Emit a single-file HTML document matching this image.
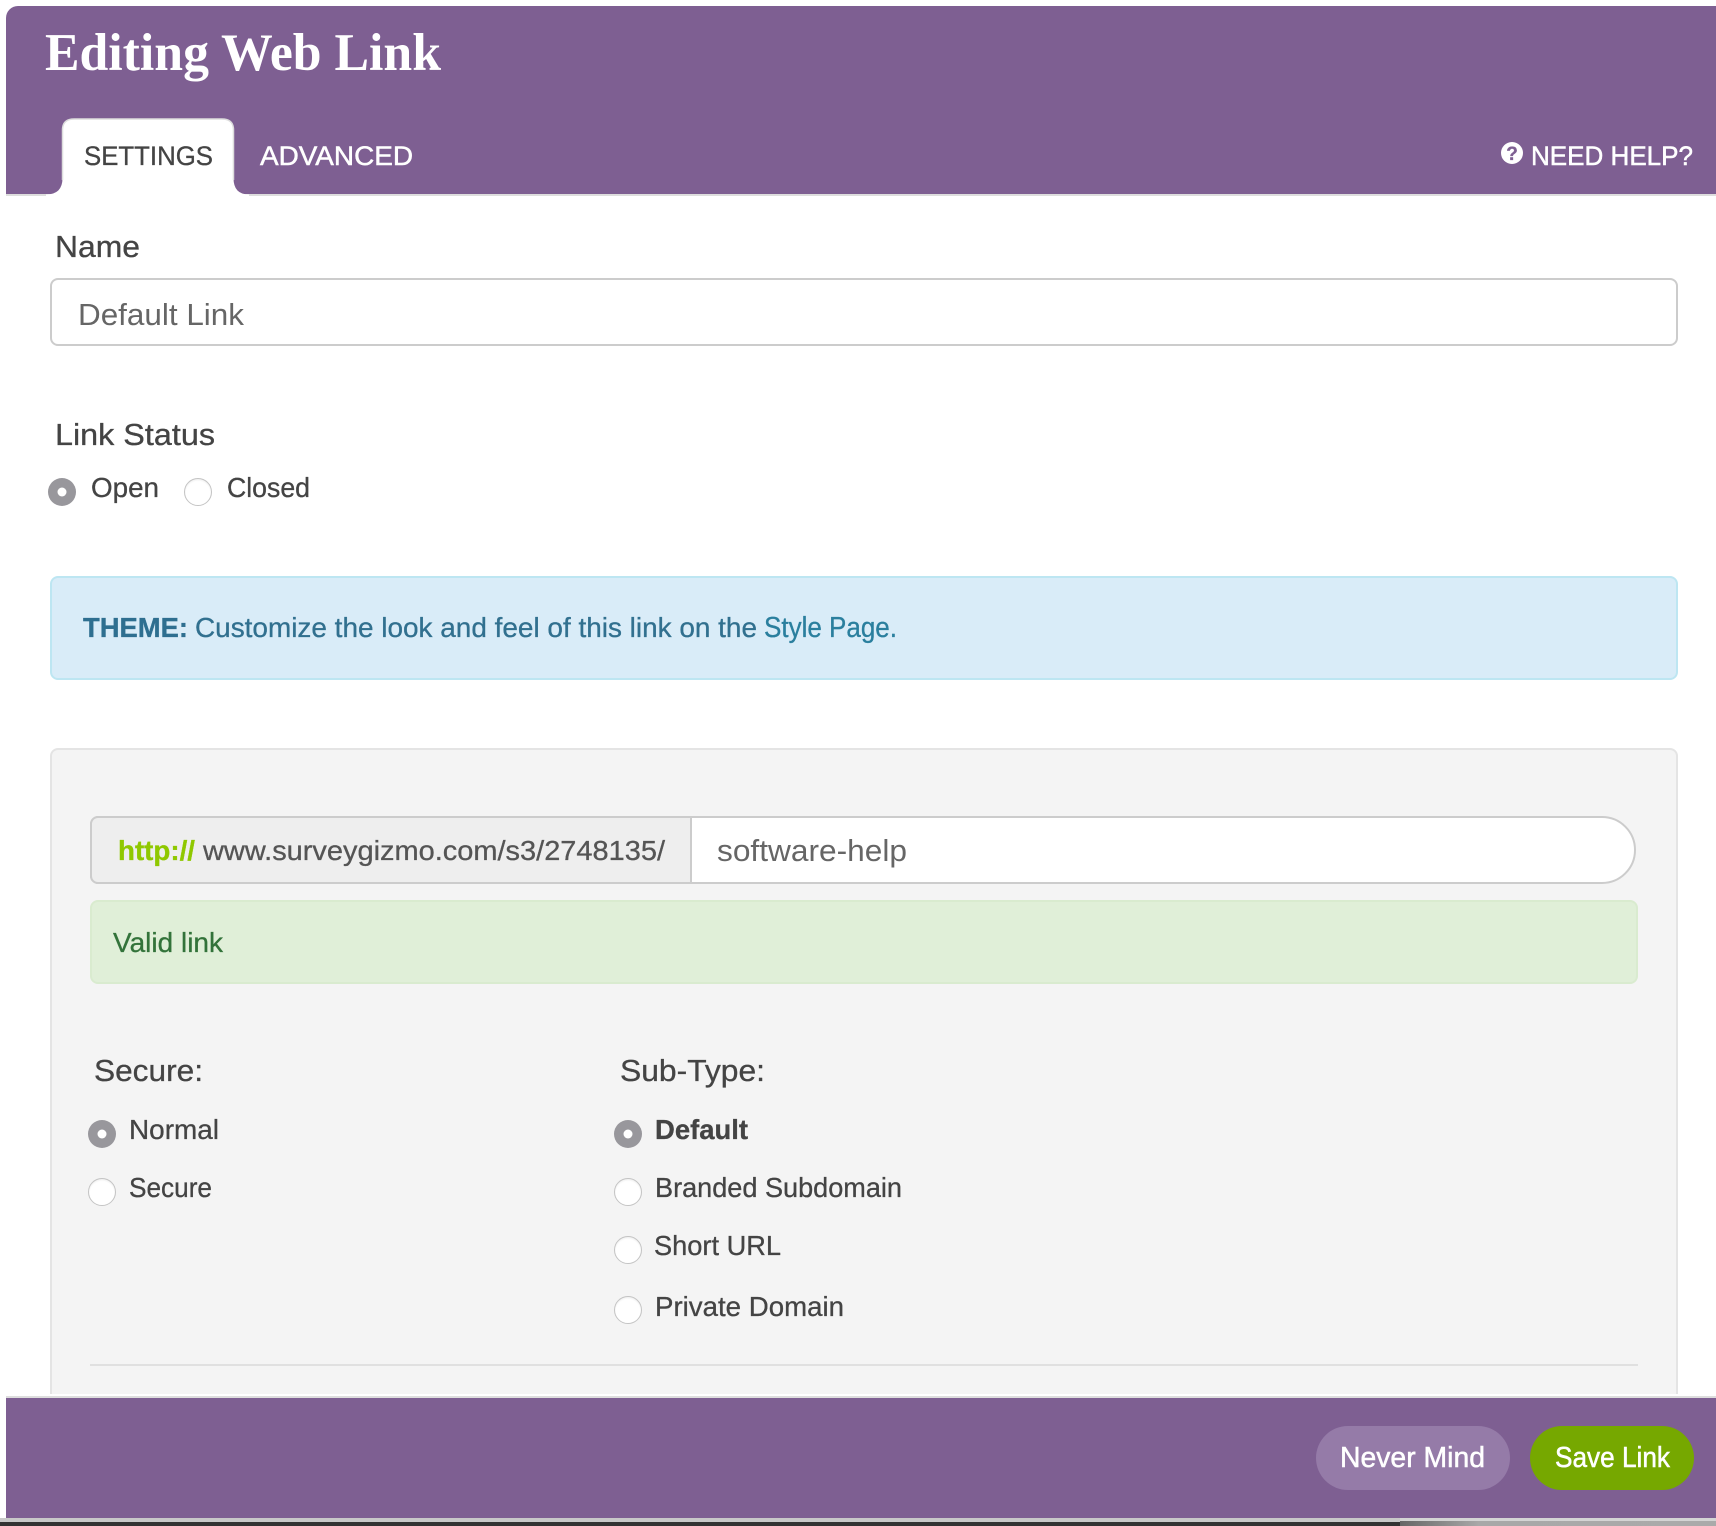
<!DOCTYPE html>
<html lang="en">
<head>
<meta charset="utf-8">
<title>Editing Web Link</title>
<style>
html,body{margin:0;padding:0;background:#fff;}
body{position:relative;width:1716px;height:1526px;overflow:hidden;font-family:"Liberation Sans",sans-serif;}
.a{position:absolute;box-sizing:border-box;}
svg{position:absolute;left:0;top:0;}
text{font-family:"Liberation Sans",sans-serif;fill:#444;font-size:28px;stroke:#444;stroke-width:.3px;}
</style>
</head>
<body>
<div class="a" style="left:6px;top:6px;width:1710px;height:188px;background:#7e5f92;border-radius:12px 0 0 0;"></div>
<div class="a" style="left:6px;top:194px;width:1710px;height:2px;background:#ddd;"></div>

<div class="a" style="left:50px;top:278px;width:1628px;height:68px;border:2px solid #ccc;border-radius:8px;background:#fff;"></div>
<div class="a" style="left:50px;top:576px;width:1628px;height:104px;border:2px solid #bde6f2;border-radius:8px;background:#d9ecf8;"></div>
<div class="a" style="left:50px;top:748px;width:1628px;height:660px;border:2px solid #e4e4e4;border-radius:8px;background:#f4f4f4;"></div>

<div class="a" style="left:90px;top:816px;width:1546px;height:68px;border:2px solid #ccc;border-radius:8px 34px 34px 8px;background:#fff;"></div>
<div class="a" style="left:90px;top:816px;width:602px;height:68px;border:2px solid #ccc;border-radius:8px 0 0 8px;background:#eee;"></div>
<div class="a" style="left:90px;top:900px;width:1548px;height:84px;border:2px solid #d9ebcf;border-radius:8px;background:#e0efd8;"></div>
<div class="a" style="left:90px;top:1364px;width:1548px;height:2px;background:#e0e0e0;"></div>

<div class="a" style="left:0;top:1394px;width:1716px;height:2px;background:#fff;"></div>
<div class="a" style="left:6px;top:1396px;width:1710px;height:2px;background:#ddd;"></div>
<div class="a" style="left:6px;top:1398px;width:1710px;height:120px;background:#7e5f92;"></div>
<div class="a" style="left:0;top:1396px;width:6px;height:122px;background:#fff;"></div>
<div class="a" style="left:0;top:1518px;width:1400px;height:4px;background:#c8c8c8;"></div>
<div class="a" style="left:0;top:1522px;width:1400px;height:4px;background:#333;"></div>
<div class="a" style="left:1400px;top:1518px;width:316px;height:3px;background:#d4d4d4;"></div>
<div class="a" style="left:1400px;top:1521px;width:316px;height:5px;background:linear-gradient(90deg,#666,#a8a8a8 25%,#aaa);"></div>
<div class="a" style="left:1316px;top:1426px;width:194px;height:64px;border-radius:32px;background:#957ba8;"></div>
<div class="a" style="left:1530px;top:1426px;width:164px;height:64px;border-radius:32px;background:#76a800;"></div>

<svg width="1716" height="1526" viewBox="0 0 1716 1526" xmlns="http://www.w3.org/2000/svg">
  <defs>
    <radialGradient id="off" cx="50%" cy="55%" r="55%">
      <stop offset="0.8" stop-color="#fff"/>
      <stop offset="1" stop-color="#ececec"/>
    </radialGradient>
  </defs>

  <!-- active tab -->
  <path d="M46 196 L46 194.500 Q62.500 194.500 62.500 178 L62.500 130 Q62.500 119 74 119 L222 119 Q233.500 119 233.500 130 L233.500 178 Q233.500 194.500 249 194.500 L249 196 Z" fill="#fff"/>
  <path d="M62.500 180 L62.500 130 Q62.500 119 74 119 L222 119 Q233.500 119 233.500 130 L233.500 180" fill="none" stroke="#ddd" stroke-width="1.500"/>

  <text x="45" y="70" textLength="396" lengthAdjust="spacingAndGlyphs" style="font-family:'Liberation Serif',serif;font-weight:700;font-size:53px;fill:#fff;stroke:none">Editing Web Link</text>
  <text x="84" y="165" textLength="129" lengthAdjust="spacingAndGlyphs" style="font-size:27px">SETTINGS</text>
  <text x="260" y="165" textLength="153" lengthAdjust="spacingAndGlyphs" style="font-size:27px;fill:#fff;stroke:#fff;stroke-width:.5px">ADVANCED</text>

  <circle cx="1512" cy="153" r="11" fill="#fff"/>
  <text x="1512" y="160" text-anchor="middle" style="font-size:19px;font-weight:700;fill:#7e5f92;stroke:#7e5f92">?</text>
  <text x="1531" y="165" textLength="162" lengthAdjust="spacingAndGlyphs" style="font-size:27px;fill:#fff;stroke:#fff;stroke-width:.5px">NEED HELP?</text>

  <text x="55" y="257" textLength="85" lengthAdjust="spacingAndGlyphs" style="font-size:31px">Name</text>
  <text x="78" y="325" textLength="166" lengthAdjust="spacingAndGlyphs" style="font-size:31px;fill:#666;stroke:none">Default Link</text>

  <text x="55" y="445" textLength="160" lengthAdjust="spacingAndGlyphs" style="font-size:31px">Link Status</text>
  <circle cx="62" cy="492" r="14" fill="#98979c" stroke="none"/><circle cx="62" cy="492" r="4.500" fill="#fff"/>
  <text x="91" y="497" textLength="68" lengthAdjust="spacingAndGlyphs">Open</text>
  <circle cx="198" cy="492" r="13.500" fill="url(#off)" stroke="#c4c4c4" stroke-width="1"/>
  <text x="227" y="497" textLength="83" lengthAdjust="spacingAndGlyphs">Closed</text>

  <text x="83" y="637" textLength="105" lengthAdjust="spacingAndGlyphs" style="font-size:28px;font-weight:700;fill:#2e6f90;stroke:#2e6f90">THEME:</text>
  <text x="195" y="637" textLength="562" lengthAdjust="spacingAndGlyphs" style="font-size:28px;fill:#31708f;stroke:#31708f">Customize the look and feel of this link on the</text>
  <text x="764" y="637" textLength="133" lengthAdjust="spacingAndGlyphs" style="font-size:29px;fill:#2a7f9e;stroke:#2a7f9e">Style Page.</text>

  <text x="118" y="860" textLength="77" lengthAdjust="spacingAndGlyphs" style="font-size:28px;font-weight:700;fill:#8fc800;stroke:#8fc800">http://</text>
  <text x="203" y="860" textLength="462" lengthAdjust="spacingAndGlyphs" style="font-size:28px;fill:#555;stroke:#555">www.surveygizmo.com/s3/2748135/</text>
  <text x="717" y="861" textLength="190" lengthAdjust="spacingAndGlyphs" style="font-size:31px;fill:#666;stroke:none">software-help</text>

  <text x="113" y="952" textLength="110" lengthAdjust="spacingAndGlyphs" style="font-size:28px;fill:#33733a;stroke:#33733a">Valid link</text>

  <text x="94" y="1081" textLength="109" lengthAdjust="spacingAndGlyphs" style="font-size:31px">Secure:</text>
  <text x="620" y="1081" textLength="145" lengthAdjust="spacingAndGlyphs" style="font-size:31px">Sub-Type:</text>

  <circle cx="102" cy="1134" r="14" fill="#98979c" stroke="none"/><circle cx="102" cy="1134" r="4.500" fill="#fff"/>
  <text x="129" y="1139" textLength="90" lengthAdjust="spacingAndGlyphs">Normal</text>
  <circle cx="102" cy="1192" r="13.500" fill="url(#off)" stroke="#c4c4c4" stroke-width="1"/>
  <text x="129" y="1197" textLength="83" lengthAdjust="spacingAndGlyphs">Secure</text>

  <circle cx="628" cy="1134" r="14" fill="#98979c" stroke="none"/><circle cx="628" cy="1134" r="4.500" fill="#fff"/>
  <text x="655" y="1139" textLength="93" lengthAdjust="spacingAndGlyphs" style="font-weight:700">Default</text>
  <circle cx="628" cy="1192" r="13.500" fill="url(#off)" stroke="#c4c4c4" stroke-width="1"/>
  <text x="655" y="1197" textLength="247" lengthAdjust="spacingAndGlyphs">Branded Subdomain</text>
  <circle cx="628" cy="1250" r="13.500" fill="url(#off)" stroke="#c4c4c4" stroke-width="1"/>
  <text x="654" y="1255" textLength="127" lengthAdjust="spacingAndGlyphs">Short URL</text>
  <circle cx="628" cy="1310" r="13.500" fill="url(#off)" stroke="#c4c4c4" stroke-width="1"/>
  <text x="655" y="1316" textLength="189" lengthAdjust="spacingAndGlyphs">Private Domain</text>

  <text x="1340" y="1467" textLength="145" lengthAdjust="spacingAndGlyphs" style="font-size:29px;fill:#fff;stroke:#fff;stroke-width:.5px">Never Mind</text>
  <text x="1555" y="1467" textLength="115" lengthAdjust="spacingAndGlyphs" style="font-size:29px;fill:#fff;stroke:#fff;stroke-width:.5px">Save Link</text>
</svg>
</body>
</html>
